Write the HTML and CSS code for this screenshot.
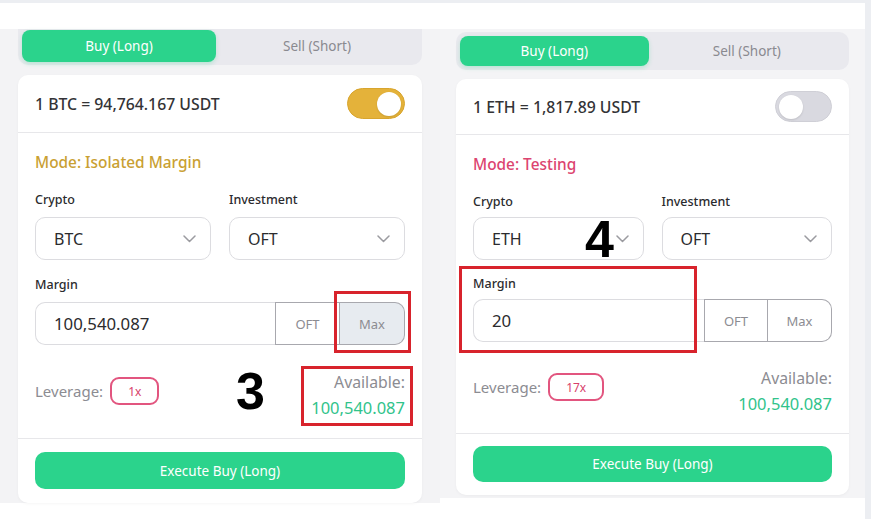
FILE: index.html
```html
<!DOCTYPE html>
<html lang="en">
<head>
<meta charset="utf-8">
<title>Trade panels</title>
<link rel="stylesheet" href="styles.css">
</head>
<body>
<div class="screen">
  <div class="topbar"></div>
  <div class="panels">
    <section class="panel panel--a">
      <div class="tabs">
        <div class="tab tab--active">Buy (Long)</div>
        <div class="tab">Sell (Short)</div>
      </div>
      <div class="card">
        <div class="card-head">
          <span class="rate">1 BTC = 94,764.167 USDT</span>
          <span class="toggle toggle--on"><span class="knob"></span></span>
        </div>
        <div class="card-body">
          <div class="mode mode--gold">Mode: Isolated Margin</div>
          <div class="grid2">
            <div class="field">
              <div class="label">Crypto</div>
              <div class="select"><span>BTC</span><svg class="chev" width="13" height="8" viewBox="0 0 13 8"><polyline points="1,1 6.5,6.5 12,1" fill="none" stroke="#9b9ba0" stroke-width="1.5" stroke-linecap="round" stroke-linejoin="round"/></svg></div>
            </div>
            <div class="field">
              <div class="label">Investment</div>
              <div class="select"><span>OFT</span><svg class="chev" width="13" height="8" viewBox="0 0 13 8"><polyline points="1,1 6.5,6.5 12,1" fill="none" stroke="#9b9ba0" stroke-width="1.5" stroke-linecap="round" stroke-linejoin="round"/></svg></div>
            </div>
          </div>
          <div class="field field--margin">
            <div class="label">Margin</div>
            <div class="input-group">
              <div class="input">100,540.087</div>
              <div class="addon">OFT</div>
              <div class="addon addon--max addon--shaded">Max</div>
            </div>
          </div>
          <div class="lev-row">
            <div class="lev"><span>Leverage:</span><span class="badge">1x</span></div>
            <div class="avail"><div>Available:</div><div class="avail-val">100,540.087</div></div>
          </div>
        </div>
        <div class="card-foot"><button class="exec">Execute Buy (Long)</button></div>
      </div>
      <div class="annot annot--max"></div>
      <div class="annot annot--avail"></div>
      <div class="num num--3">3</div>
    </section>

    <section class="panel panel--b">
      <div class="tabs">
        <div class="tab tab--active">Buy (Long)</div>
        <div class="tab">Sell (Short)</div>
      </div>
      <div class="card card--b">
        <div class="card-head">
          <span class="rate">1 ETH = 1,817.89 USDT</span>
          <span class="toggle toggle--off"><span class="knob"></span></span>
        </div>
        <div class="card-body">
          <div class="mode mode--pink">Mode: Testing</div>
          <div class="grid2">
            <div class="field">
              <div class="label">Crypto</div>
              <div class="select"><span>ETH</span><svg class="chev" width="13" height="8" viewBox="0 0 13 8"><polyline points="1,1 6.5,6.5 12,1" fill="none" stroke="#9b9ba0" stroke-width="1.5" stroke-linecap="round" stroke-linejoin="round"/></svg></div>
            </div>
            <div class="field">
              <div class="label">Investment</div>
              <div class="select"><span>OFT</span><svg class="chev" width="13" height="8" viewBox="0 0 13 8"><polyline points="1,1 6.5,6.5 12,1" fill="none" stroke="#9b9ba0" stroke-width="1.5" stroke-linecap="round" stroke-linejoin="round"/></svg></div>
            </div>
          </div>
          <div class="field field--margin">
            <div class="label">Margin</div>
            <div class="input-group">
              <div class="input">20</div>
              <div class="addon">OFT</div>
              <div class="addon addon--max">Max</div>
            </div>
          </div>
          <div class="lev-row">
            <div class="lev"><span>Leverage:</span><span class="badge">17x</span></div>
            <div class="avail"><div>Available:</div><div class="avail-val">100,540.087</div></div>
          </div>
        </div>
        <div class="card-foot"><button class="exec">Execute Buy (Long)</button></div>
      </div>
      <div class="annot annot--margin"></div>
      <div class="num num--4">4</div>
    </section>
  </div>
</div>
</body>
</html>
```

FILE: styles.css
```css
body {
  margin: 0;
  background: #eceef2;
  font-family: "Noto Sans", "Open Sans", sans-serif;
  color: #2b2b2e;
}

.screen {
  margin-top: 3px;
  width: 865px;
  height: 516px;
  background: #ffffff;
}

.topbar {
  height: 26px;
}

.panels {
  display: flex;
  align-items: flex-start;
}

.panel {
  position: relative;
  box-sizing: border-box;
  background: #f3f3f5;
}

.panel--a {
  width: 440px;
  height: 474px;
  padding: 0 18px;
}

.panel--b {
  width: 425px;
  height: 469px;
  padding: 3px 16px 0;
  background: #f4f4f6;
}

/* Tabs */
.tabs {
  display: flex;
  box-sizing: border-box;
  height: 36px;
  padding: 1px 4px 3px;
  background: #e9e9ee;
  border-radius: 0 0 10px 10px;
}

.panel--b .tabs {
  height: 38px;
  padding: 4px;
  border-radius: 10px;
}

.tab {
  flex: 1;
  display: flex;
  align-items: center;
  justify-content: center;
  font-size: 13.5px;
  color: #8a8a90;
}

.tab--active {
  flex: 0 0 49%;
  background: #2bd38c;
  color: #ffffff;
  border-radius: 8px;
  box-shadow: 0 2px 4px rgba(43, 211, 140, 0.25);
}

/* Card */
.card {
  margin-top: 10px;
  background: #ffffff;
  border-radius: 10px;
  box-shadow: 0 1px 3px rgba(0, 0, 0, 0.04);
}

.panel--b .card {
  margin-top: 9px;
}

.card-head {
  height: 57px;
  display: flex;
  align-items: center;
  justify-content: space-between;
  padding: 0 17px;
  border-bottom: 1px solid #e7e7ea;
}

.card--b .card-head {
  height: 55px;
}

.rate {
  font-size: 15.8px;
  font-weight: 500;
  color: #333336;
}

.toggle {
  box-sizing: border-box;
  width: 58px;
  height: 31px;
  border-radius: 16px;
  padding: 3px;
  display: flex;
  align-items: center;
}

.toggle--on {
  background: #e4b23a;
  border: 1px solid #d8a52e;
  justify-content: flex-end;
}

.toggle--off {
  width: 57px;
  background: #d9d9e0;
  border: 1px solid #cfcfd6;
  justify-content: flex-start;
}

.knob {
  width: 24px;
  height: 24px;
  border-radius: 50%;
  background: #ffffff;
  box-shadow: 0 1px 2px rgba(0, 0, 0, 0.12);
}

.card-body {
  padding: 20px 17px 17px;
  border-bottom: 1px solid #e7e7ea;
}

.card--b .card-body {
  padding-bottom: 16px;
}

.mode {
  font-size: 15.4px;
  font-weight: 500;
  line-height: 20px;
  margin-bottom: 19px;
}

.mode--gold {
  color: #c9a032;
}

.mode--pink {
  color: #dc4470;
}

.grid2 {
  display: grid;
  grid-template-columns: 1fr 1fr;
  column-gap: 18px;
}

.label {
  font-size: 12.5px;
  line-height: 16px;
  font-weight: 500;
  color: #2b2b2e;
  margin-bottom: 9px;
}

.card--b .label {
  margin-bottom: 7px;
}

.select {
  box-sizing: border-box;
  height: 43px;
  border: 1px solid #dcdce0;
  border-radius: 10px;
  display: flex;
  align-items: center;
  justify-content: space-between;
  padding: 0 14px 0 18px;
  font-size: 16px;
  color: #2b2b2e;
}

.field--margin {
  margin-top: 17px;
}

.card--b .field--margin {
  margin-top: 16px;
}

.input-group {
  display: flex;
  height: 43px;
}

.input {
  flex: 1;
  display: flex;
  align-items: center;
  padding-left: 18px;
  border: 1px solid #dcdce0;
  border-right: none;
  border-radius: 10px 0 0 10px;
  font-size: 16.8px;
  color: #2b2b2e;
}

.addon {
  box-sizing: border-box;
  width: 65px;
  display: flex;
  align-items: center;
  justify-content: center;
  border: 1px solid #a8a8ae;
  font-size: 13px;
  color: #8c8c92;
}

.card--b .addon {
  width: 64px;
}

.addon--max {
  border-left: none;
  border-radius: 0 10px 10px 0;
}

.addon--shaded {
  background: #e7ebf0;
}

.lev-row {
  margin-top: 24px;
  display: flex;
  justify-content: space-between;
  align-items: flex-start;
}

.card--b .lev-row {
  margin-top: 23px;
}

.lev {
  margin-top: 8px;
  display: flex;
  align-items: center;
  gap: 7px;
  font-size: 15px;
  color: #8c8c92;
}

.badge {
  box-sizing: border-box;
  height: 28px;
  padding: 0 16px;
  display: flex;
  align-items: center;
  border: 2px solid #e2557f;
  border-radius: 9px;
  font-size: 12px;
  color: #d8416b;
}

.avail {
  text-align: right;
  font-size: 15.8px;
  line-height: 26px;
  color: #8c8c92;
}

.avail-val {
  font-size: 16.5px;
  color: #31c38b;
}

.card-foot {
  padding: 13px 17px 14px;
}

.card--b .card-foot {
  padding: 12px 17px 13px;
}

.exec {
  display: block;
  width: 100%;
  height: 37px;
  border: none;
  border-radius: 10px;
  background: #2bd38c;
  color: #ffffff;
  font-family: inherit;
  font-size: 13.5px;
}

.card--b .exec {
  height: 36px;
}

/* Annotations overlaid on the screenshots */
.annot {
  position: absolute;
  box-sizing: border-box;
  border: 3px solid #d8232c;
}

.annot--max {
  left: 334px;
  top: 262px;
  width: 77px;
  height: 62px;
}

.annot--avail {
  left: 301px;
  top: 337px;
  width: 112px;
  height: 60px;
}

.annot--margin {
  left: 19px;
  top: 237px;
  width: 238px;
  height: 87px;
}

.num {
  position: absolute;
  font-family: "Liberation Sans", sans-serif;
  font-weight: bold;
  font-size: 52px;
  line-height: 52px;
  color: #000000;
}

.num--3 {
  left: 236px;
  top: 336px;
}

.num--4 {
  left: 145px;
  top: 184px;
}
```
